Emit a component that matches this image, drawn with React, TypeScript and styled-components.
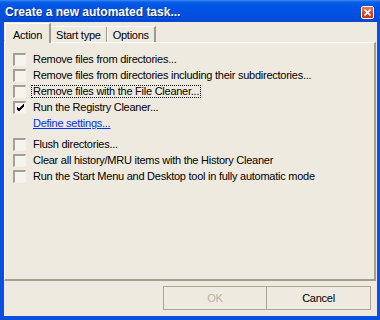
import React, { useState } from "react";
import styled, { createGlobalStyle } from "styled-components";

const GlobalStyle = createGlobalStyle`
  html, body { margin: 0; padding: 0; background: #ffffff; }
  body { font-family: "Liberation Sans", Arial, sans-serif; }
`;

const Window = styled.div`
  width: 380px;
  height: 320px;
  box-sizing: border-box;
  display: flex;
  flex-direction: column;
  background: #0a4fe0;
  padding: 0 3px 4px 4px;
`;

const TitleBar = styled.div`
  height: 22px;
  margin: 0 -3px 0 -4px;
  padding: 0 6px 0 5px;
  display: flex;
  align-items: center;
  justify-content: space-between;
  background: linear-gradient(#3d8cf7 0px, #0a5fe6 2px, #0055e5 6px, #0250e0 16px, #0347d0 22px);
`;

const Title = styled.span`
  color: #ffffff;
  font-family: "Liberation Sans", Arial, sans-serif;
  font-weight: bold;
  font-size: 12px;
  letter-spacing: 0;
  text-shadow: 1px 1px 0 #0a2a8a;
  margin-top: 1px;
`;

const CloseButton = styled.div`
  width: 13px;
  height: 13px;
  box-sizing: border-box;
  border: 1px solid #ffffff;
  border-radius: 2px;
  background: linear-gradient(#e87a5a, #d9441e 60%, #c23a14);
  display: flex;
  align-items: center;
  justify-content: center;
  margin-top: 2px;
`;

const Client = styled.div`
  flex: 1;
  display: flex;
  flex-direction: column;
  background: #efeae0;
  font-size: 11px;
  letter-spacing: -0.25px;
  color: #000000;
`;

const TabStrip = styled.div`
  height: 20px;
  display: flex;
  align-items: flex-end;
  padding-left: 1px;
`;

const Tab = styled.div<{ $active?: boolean }>`
  box-sizing: border-box;
  height: ${(p) => (p.$active ? "20px" : "16px")};
  padding: 0 ${(p) => (p.$active ? "7px" : "5px")};
  padding-top: ${(p) => (p.$active ? "2px" : "1px")};
  margin-left: ${(p) => (p.$active ? "0" : "-1px")};
  margin-bottom: ${(p) => (p.$active ? "-1px" : "0")};
  border-top: 1px solid #ffffff;
  border-left: 1px solid #ffffff;
  border-right: 2px solid #a09a8c;
  background: #efeae0;
  display: flex;
  align-items: center;
  position: relative;
  z-index: ${(p) => (p.$active ? 1 : 0)};
`;

const Panel = styled.div`
  height: 239px;
  width: 372px;
  box-sizing: border-box;
  border-top: 1px solid #ffffff;
  border-left: 1px solid #ffffff;
  border-right: 2px solid #a49e90;
  border-bottom: 2px solid #a49e90;
  padding: 8px 0 0 8px;
  display: flex;
  flex-direction: column;
`;

const Row = styled.label`
  height: 16px;
  display: flex;
  align-items: center;
  white-space: nowrap;
`;

const Box = styled.span`
  width: 13px;
  height: 13px;
  box-sizing: border-box;
  flex: none;
  background: #f6f4ee;
  border-top: 2px solid #a39f93;
  border-left: 2px solid #a39f93;
  border-right: 1px solid #f4f2ea;
  border-bottom: 1px solid #f4f2ea;
  display: flex;
  align-items: center;
  justify-content: center;
  margin-right: 5px;
`;

const Label = styled.span<{ $focused?: boolean }>`
  padding: 0 1px;
  line-height: 11px;
  border: 1px dotted ${(p) => (p.$focused ? "#000000" : "transparent")};
`;

const LinkRow = styled.div`
  height: 16px;
  display: flex;
  align-items: center;
  padding-left: 20px;
  margin-bottom: 5px;
`;

const Link = styled.a`
  color: #0033ee;
  text-decoration: underline;
  cursor: pointer;
`;

const Footer = styled.div`
  flex: 1;
  display: flex;
  justify-content: flex-end;
  align-items: flex-start;
  padding: 5px 6px 0 0;
`;

const Button = styled.div<{ $disabled?: boolean }>`
  width: 104px;
  height: 24px;
  box-sizing: border-box;
  border: 1px solid #aaa596;
  display: flex;
  align-items: center;
  justify-content: center;
  color: ${(p) => (p.$disabled ? "#b6b2a6" : "#000000")};
  & + & { border-left: 0; }
`;

const Check = () => (
  <svg width="9" height="9" viewBox="0 0 9 9">
    <path d="M1 4 L3 6 L8 1 M1 5 L3 7 L8 2 M1 6 L3 8 L8 3" stroke="#000" strokeWidth="1" fill="none" shapeRendering="crispEdges" />
  </svg>
);

type Item = { text: string; checked?: boolean; focused?: boolean };

const firstGroup: Item[] = [
  { text: "Remove files from directories..." },
  { text: "Remove files from directories including their subdirectories..." },
  { text: "Remove files with the File Cleaner...", focused: true },
  { text: "Run the Registry Cleaner...", checked: true },
];

const secondGroup: Item[] = [
  { text: "Flush directories..." },
  { text: "Clear all history/MRU items with the History Cleaner" },
  { text: "Run the Start Menu and Desktop tool in fully automatic mode" },
];

function CheckRow({ item }: { item: Item }) {
  return (
    <Row>
      <Box>{item.checked && <Check />}</Box>
      <Label $focused={item.focused}>{item.text}</Label>
    </Row>
  );
}

export default function App() {
  const [tab] = useState("Action");
  return (
    <>
      <GlobalStyle />
      <Window>
        <TitleBar>
          <Title>Create a new automated task...</Title>
          <CloseButton>
            <svg width="7" height="7" viewBox="0 0 7 7">
              <path d="M0.5 0.5 L6.5 6.5 M6.5 0.5 L0.5 6.5" stroke="#fff" strokeWidth="1.6" />
            </svg>
          </CloseButton>
        </TitleBar>
        <Client>
          <TabStrip>
            {["Action", "Start type", "Options"].map((t) => (
              <Tab key={t} $active={t === tab}>{t}</Tab>
            ))}
          </TabStrip>
          <Panel>
            {firstGroup.map((it) => <CheckRow key={it.text} item={it} />)}
            <LinkRow><Link>Define settings...</Link></LinkRow>
            {secondGroup.map((it) => <CheckRow key={it.text} item={it} />)}
          </Panel>
          <Footer>
            <Button $disabled>OK</Button>
            <Button>Cancel</Button>
          </Footer>
        </Client>
      </Window>
    </>
  );
}
